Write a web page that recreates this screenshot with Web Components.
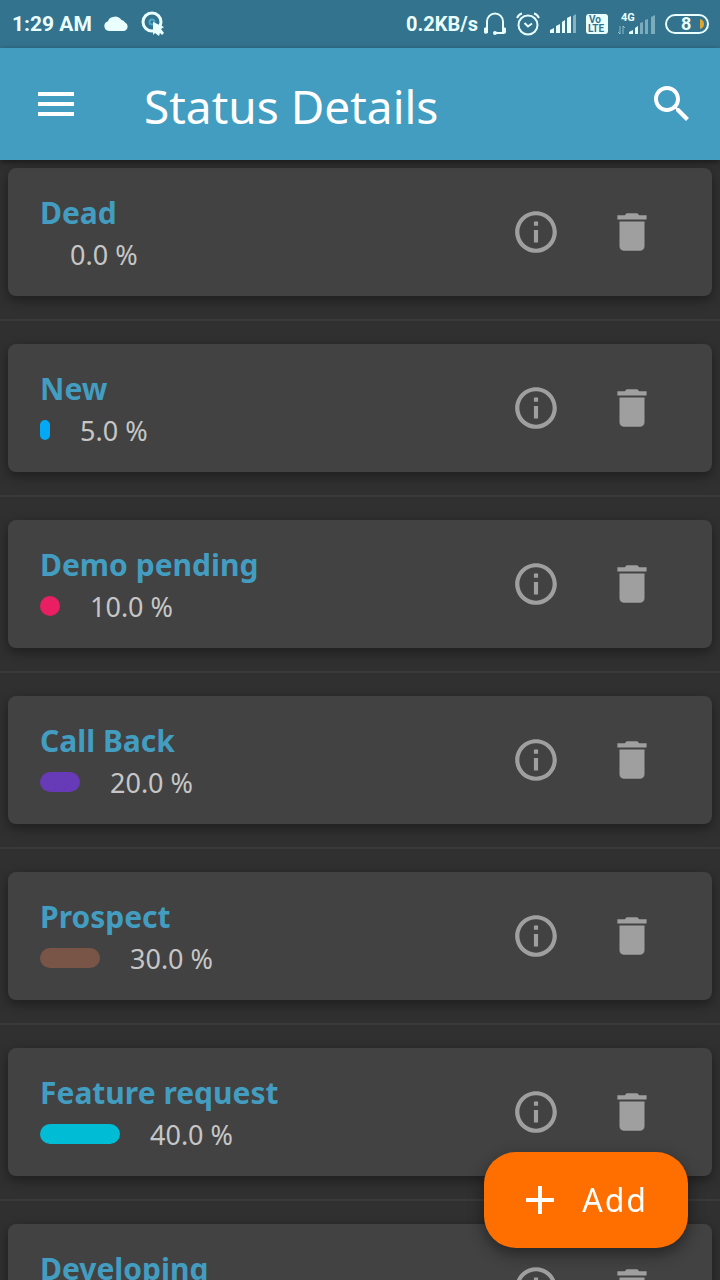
<!DOCTYPE html>
<html lang="en">
<head>
<meta charset="utf-8">
<meta name="viewport" content="width=device-width, initial-scale=1">
<title>Status Details</title>
<style>
  html, body { height: 100%; margin: 0; }
  body { background: #303030; font-family: "Noto Sans", "Open Sans", sans-serif; overflow: hidden; }
</style>
</head>
<body>
<status-app></status-app>

<template id="system-bar">
  <style>
    :host { display: flex; align-items: center; justify-content: space-between; height: 48px; padding: 0 11px 0 12px;
      background: #33738e; color: #eaffff; font: 700 21px/48px Roboto, sans-serif; }
    .side { display: flex; align-items: center; }
    .left { gap: 12px; }
    .right { gap: 8px; }
    .rate { display: flex; align-items: center; gap: 5px; font-size: 20px; }
    svg { display: block; fill: currentColor; }
    text { font-family: Roboto, sans-serif; font-weight: 700; }
    .line { fill: none; stroke: currentColor; }
  </style>
  <div class="side left">
    <span>1:29 AM</span>
    <svg width="25" height="24" viewBox="0 0 25 24" aria-hidden="true"><path d="M5 19a5 5 0 0 1-1-9.800A6 6 0 0 1 9 5a7 7 0 0 1 8.500 3A5 5 0 0 1 21 10.500 4.500 4.500 0 0 1 20 19z"/></svg>
    <svg width="24" height="28" viewBox="0 0 24 28" aria-hidden="true">
      <circle cx="11" cy="12" r="9" class="line" stroke-width="3"/>
      <circle cx="11" cy="12" r="2.500" fill="none" stroke="#4fa8c8" stroke-width="2"/>
      <path d="M12 12l11 5-3 2 3 4-2 2-2-2-1 3-4-3-2 2z"/>
    </svg>
  </div>
  <div class="side right">
    <div class="rate"><span>0.2KB/s</span>
      <svg width="24" height="24" viewBox="0 0 24 24" aria-hidden="true">
        <path class="line" stroke-width="2" d="M4 17V9.500a8 8 0 0 1 16 0V17M20 18v3h-8"/>
        <path d="M1 16q4-2 4 1v4q-4 2-4-1zM23 16q-4-2-4 1v4q4 2 4-1z"/><circle cx="12" cy="21" r="2"/>
      </svg></div>
    <svg width="26" height="24" viewBox="0 0 26 24" aria-hidden="true">
      <g class="line" stroke-width="2"><circle cx="13" cy="13" r="9.500"/><path d="M9.500 11l3.500 3.500 4-3M2 6q2-4 5-4.500M24 6q-2-4-5-4.500"/></g>
    </svg>
    <svg width="28" height="20" viewBox="0 0 28 20" aria-hidden="true">
      <path d="M1 19v-3l4-2v5zM7 19v-7l4-2v9zM13 19V8l3-2v13zM18 19V4l4-2v17z"/><path opacity=".45" d="M24 19V2l3-2v19z"/>
    </svg>
    <svg width="24" height="22" viewBox="0 0 24 22" aria-label="VoLTE">
      <rect x="1" y="1" width="22" height="20" rx="3"/>
      <g fill="#33738e" font-size="10"><text x="4" y="10">Vo</text><text x="3" y="19">LTE</text></g>
    </svg>
    <svg width="40" height="26" viewBox="0 0 40 26" aria-label="4G">
      <text x="4" y="10" font-size="11">4G</text>
      <path class="line" opacity=".5" d="M3 15v8l-2-2M6 23v-8l2 2"/>
      <path d="M12 23v-2l4-2v4zM18 23v-6l3-2v8z"/><path opacity=".4" d="M23 23V12l3-1v12zM28 23V9l3-1v15zM34 23V6l4-2v19z"/>
    </svg>
    <svg width="44" height="22" viewBox="0 0 44 22" aria-label="Battery 8">
      <rect class="line" x="1" y="2" width="42" height="18" rx="9" stroke-width="2"/>
      <path fill="#e0a52e" d="M35 6q4 1 4 5t-4 5z"/>
      <text x="16" y="17" font-size="18">8</text>
    </svg>
  </div>
</template>

<template id="app-bar">
  <style>
    :host { display: flex; align-items: center; height: 112px; padding: 0 24px 0 32px; position: relative; z-index: 1;
      box-sizing: border-box; background: #439dc0; color: #fff; box-shadow: 0 2px 6px rgba(0,0,0,.5); }
    h1 { flex: 1; margin: 0 0 0 64px; padding-top: 4px; font-weight: 400; font-size: 46px; line-height: 64px; }
    button { display: block; padding: 0; border: 0; background: none; color: inherit; }
    svg { display: block; width: 48px; height: 48px; fill: currentColor; }
  </style>
  <button aria-label="Menu"><svg viewBox="0 0 24 24"><path d="M3 18h18v-2H3v2zm0-5h18v-2H3v2zm0-7v2h18V6H3z"/></svg></button>
  <h1><slot></slot></h1>
  <button aria-label="Search"><svg viewBox="0 0 24 24"><path d="M15.500 14h-.79l-.28-.27C15.410 12.590 16 11.110 16 9.500 16 5.910 13.090 3 9.500 3S3 5.910 3 9.500 5.910 16 9.500 16c1.610 0 3.090-.59 4.230-1.570l.27.28v.79l5 4.990L20.490 19l-4.990-5zm-6 0C7.010 14 5 11.990 5 9.500S7.010 5 9.500 5 14 7.010 14 9.500 11.990 14 9.500 14z"/></svg></button>
</template>

<template id="status-card">
  <style>
    :host { display: flex; align-items: center; justify-content: space-between; min-height: 128px; margin: 8px;
      padding: 0 32px; box-sizing: border-box; border-radius: 8px; background: #424242; box-shadow: 0 4px 12px rgba(0,0,0,.4); }
    .info { align-self: flex-start; padding-top: 24px; }
    h2 { margin: 0; color: #439dc0; font-size: 30px; line-height: 42px; font-weight: 700; }
    .meter { display: flex; align-items: flex-start; gap: 30px; color: #c6c6c6; font-size: 27px; line-height: 42px; }
    .bar { height: 20px; margin-top: 10px; border-radius: 10px; }
    .actions { display: flex; }
    button { display: grid; place-items: center; width: 96px; height: 96px; padding: 0; border: 0; background: none; color: #9f9f9f; }
    svg { display: block; width: 50px; height: 50px; fill: currentColor; }
  </style>
  <div class="info">
    <h2><slot></slot></h2>
    <div class="meter"><span class="bar"></span><span class="value"></span></div>
  </div>
  <div class="actions">
    <button aria-label="Details"><svg viewBox="0 0 24 24"><path d="M11 17h2v-6h-2v6zm1-15C6.480 2 2 6.480 2 12s4.480 10 10 10 10-4.480 10-10S17.520 2 12 2zm0 18c-4.410 0-8-3.590-8-8s3.590-8 8-8 8 3.590 8 8-3.590 8-8 8zM11 9h2V7h-2v2z"/></svg></button>
    <button aria-label="Delete"><svg viewBox="0 0 24 24"><path d="M6 19c0 1.100.9 2 2 2h8c1.100 0 2-.9 2-2V7H6v12zM19 4h-3.500l-1-1h-5l-1 1H5v2h14V4z"/></svg></button>
  </div>
</template>

<template id="add-button">
  <style>
    :host { display: block; position: fixed; right: 32px; bottom: 32px; z-index: 2; }
    button { display: flex; align-items: center; gap: 18px; height: 96px; padding: 0 40px 0 32px; border: 0; border-radius: 32px;
      background: #ff6f00; color: #fff; font-family: inherit; font-size: 32px; line-height: 44px; letter-spacing: 2px;
      box-shadow: 0 6px 16px rgba(0,0,0,.45); }
    svg { display: block; width: 48px; height: 48px; fill: currentColor; }
  </style>
  <button><svg viewBox="0 0 24 24" aria-hidden="true"><path d="M19 13h-6v6h-2v-6H5v-2h6V5h2v6h6v2z"/></svg><slot></slot></button>
</template>

<template id="status-app">
  <style>
    :host { display: flex; flex-direction: column; height: 100vh; }
    main { display: flow-root; flex: 1; min-height: 0; overflow: hidden; }
    hr { height: 2px; margin: 15px 0; border: 0; background: #3a3a3a; }
  </style>
  <system-bar></system-bar>
  <app-bar>Status Details</app-bar>
  <main></main>
  <add-button>Add</add-button>
</template>

<script>
  class TemplateElement extends HTMLElement {
    constructor() {
      super();
      this.attachShadow({ mode: 'open' })
        .append(document.getElementById(this.localName).content.cloneNode(true));
    }
  }

  class StatusCard extends TemplateElement {
    connectedCallback() {
      const root = this.shadowRoot;
      const value = this.getAttribute('value');
      if (value === null) { root.querySelector('.meter').remove(); return; }
      const bar = root.querySelector('.bar');
      bar.style.width = Number(value) * 2 + 'px';
      bar.style.background = this.getAttribute('color');
      root.querySelector('.value').textContent = Number(value).toFixed(1) + ' %';
    }
  }

  const statuses = [
    ['Dead', 0, 'transparent'],
    ['New', 5, '#03a9f4'],
    ['Demo pending', 10, '#e91e63'],
    ['Call Back', 20, '#673ab7'],
    ['Prospect', 30, '#795548'],
    ['Feature request', 40, '#00bcd4'],
    ['Developing']
  ];

  class StatusApp extends TemplateElement {
    connectedCallback() {
      const list = this.shadowRoot.querySelector('main');
      statuses.forEach(([name, value, color], i) => {
        // A flow-root wrapper keeps each card's margins from collapsing into the dividers.
        const row = document.createElement('div');
        row.style.display = 'flow-root';
        const card = document.createElement('status-card');
        card.textContent = name;
        if (value !== undefined) {
          card.setAttribute('value', value);
          card.setAttribute('color', color);
        }
        row.append(card);
        if (i) list.append(document.createElement('hr'));
        list.append(row);
      });
    }
  }

  customElements.define('system-bar', class extends TemplateElement {});
  customElements.define('app-bar', class extends TemplateElement {});
  customElements.define('add-button', class extends TemplateElement {});
  customElements.define('status-card', StatusCard);
  customElements.define('status-app', StatusApp);
</script>
</body>
</html>
